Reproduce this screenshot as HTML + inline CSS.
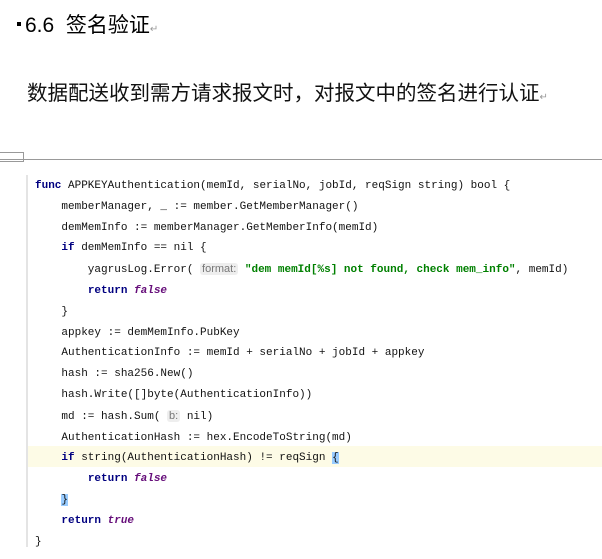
<!DOCTYPE html>
<html><head><meta charset="utf-8"><style>
body{margin:0;width:602px;height:559px;background:#fff;position:relative;overflow:hidden;font-family:"Liberation Sans","Noto Sans CJK SC",sans-serif}
.h{position:absolute;left:25px;top:9px;font-size:21px;color:#000;white-space:pre}
.bul{position:absolute;left:17px;top:22px;width:4px;height:4px;background:#000}
.p{position:absolute;left:27px;top:76px;font-size:20.5px;color:#111;white-space:pre}
.mark{color:#999;font-size:10px}
.hr{position:absolute;left:0;top:159px;width:602px;height:1px;background:#999}
.box{position:absolute;left:0;top:152px;width:24px;height:10px;border:1px solid #999;border-left:none;box-sizing:border-box}
.gut{position:absolute;left:26px;top:175px;width:2px;height:372px;background:#e4e4e4}
.hl{position:absolute;left:28px;top:446px;width:574px;height:21px;background:#fdfbe6}
.code{position:absolute;left:35px;top:176px;font-family:"Liberation Mono",monospace;font-size:11px;line-height:20.8px;color:#111;white-space:pre}
.k{color:#000080;font-weight:bold}
.i{color:#660e7a;font-style:italic;font-weight:bold}
.s{color:#008000;font-weight:bold}
.hint{background:#eee;color:#777;font-family:"Liberation Sans",sans-serif;font-size:11px;border-radius:3px;padding:0 2px}
.br{background:#99ccff}
</style></head><body>
<div class="bul"></div>
<div class="h">6.6  签名验证<span class="mark">↵</span></div>
<div class="p">数据配送收到需方请求报文时，对报文中的签名进行认证<span class="mark">↵</span></div>
<div class="box"></div><div class="hr"></div>
<div class="gut"></div><div class="hl"></div>
<div class="code"><span class="k">func</span> APPKEYAuthentication(memId, serialNo, jobId, reqSign string) bool {
    memberManager, _ := member.GetMemberManager()
    demMemInfo := memberManager.GetMemberInfo(memId)
    <span class="k">if</span> demMemInfo == nil {
        yagrusLog.Error( <span class="hint">format:</span> <span class="s">"dem memId[%s] not found, check mem_info"</span>, memId)
        <span class="k">return</span> <span class="i">false</span>
    }
    appkey := demMemInfo.PubKey
    AuthenticationInfo := memId + serialNo + jobId + appkey
    hash := sha256.New()
    hash.Write([]byte(AuthenticationInfo))
    md := hash.Sum( <span class="hint">b:</span> nil)
    AuthenticationHash := hex.EncodeToString(md)
    <span class="k">if</span> string(AuthenticationHash) != reqSign <span class="br">{</span>
        <span class="k">return</span> <span class="i">false</span>
    <span class="br">}</span>
    <span class="k">return</span> <span class="i">true</span>
}</div>
</body></html>
